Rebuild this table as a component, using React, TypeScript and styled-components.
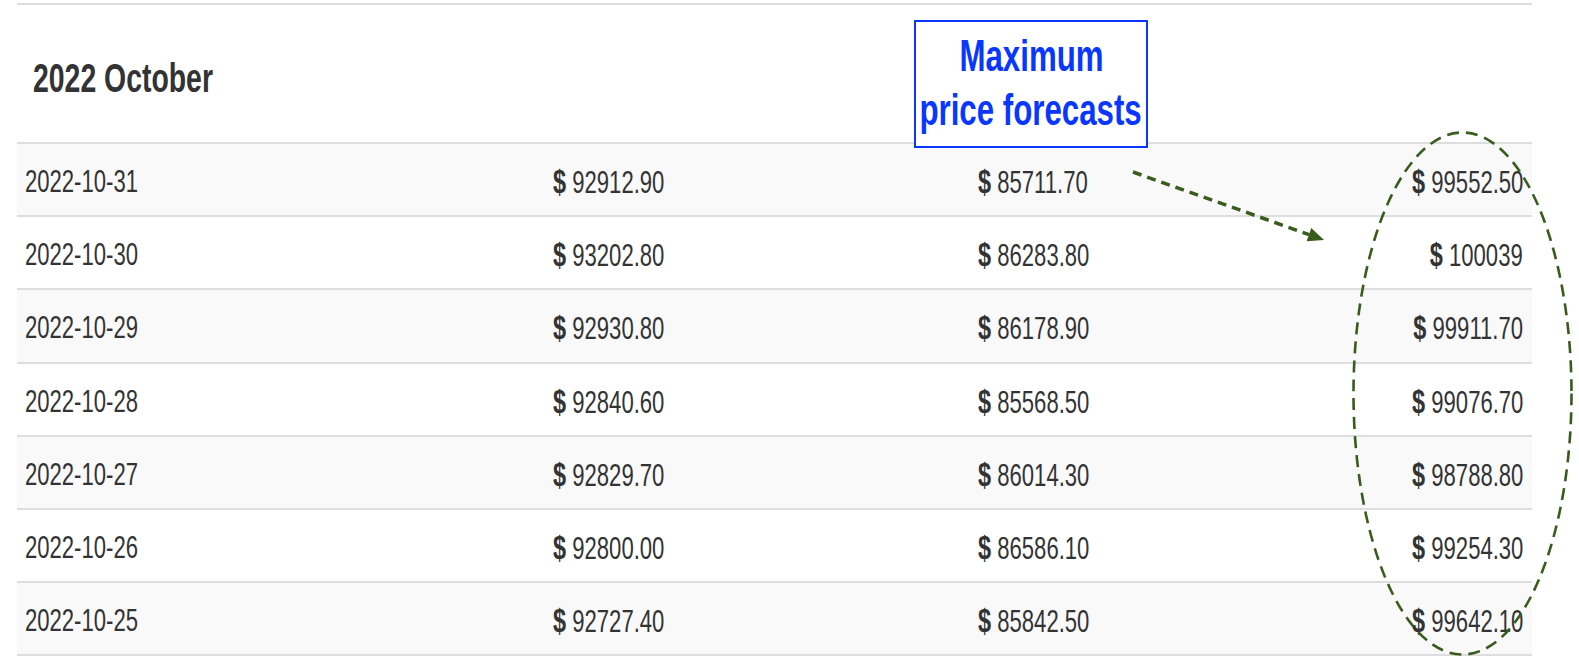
import React from "react";
import styled, { createGlobalStyle } from "styled-components";

const GlobalStyle = createGlobalStyle`
  html, body {
    margin: 0;
    padding: 0;
    background: #ffffff;
  }
  body {
    font-family: "Liberation Sans", Arial, sans-serif;
    color: #333333;
  }
`;

const Page = styled.div`
  position: relative;
  width: 1579px;
  height: 661px;
  overflow: hidden;
  padding: 3px 0 0 17px;
  box-sizing: border-box;
`;

const Table = styled.div`
  width: 1515px;
  border-top: 2.7px solid #dddddd;
`;

const HeaderRow = styled.div`
  height: 137px;
  display: flex;
  align-items: center;
  padding: 8px 0 0 16px;
  box-sizing: border-box;
`;

const Heading = styled.h2`
  margin: 0;
  font-family: "Liberation Sans", Arial, sans-serif;
  font-weight: 700;
  font-size: 40px;
  line-height: 1;
  color: #333333;
  transform: scaleX(0.71);
  transform-origin: left center;
  white-space: nowrap;
`;

const Row = styled.div<{ $striped: boolean }>`
  display: grid;
  grid-template-columns: 528px 425px 425px minmax(0, 1fr);
  height: 73.2px;
  box-sizing: border-box;
  border-top: 2px solid #dedede;
  background: ${(p) => (p.$striped ? "#f9f9f9" : "#ffffff")};
  &:last-child {
    height: 75.2px;
    border-bottom: 2.5px solid #dedede;
  }
`;

const Cell = styled.div<{ $right?: boolean }>`
  display: flex;
  align-items: center;
  justify-content: ${(p) => (p.$right ? "flex-end" : "flex-start")};
  padding: 4px ${(p) => (p.$right ? "9px" : "8px")} 0 8px;
  min-width: 0;
  font-size: 32px;
  color: #333333;
  white-space: nowrap;
`;

const Txt = styled.span<{ $right?: boolean }>`
  display: inline-block;
  flex-shrink: 0;
  transform: scaleX(0.69);
  transform-origin: ${(p) => (p.$right ? "right" : "left")} center;
`;

const Dollar = styled.span`
  font-weight: 700;
  font-size: 34px;
  margin-right: 9px;
`;

const Callout = styled.div`
  position: absolute;
  left: 914px;
  top: 20px;
  width: 234px;
  height: 128px;
  box-sizing: border-box;
  border: 2.5px solid #0a37ff;
  background: #ffffff;
  display: flex;
  flex-direction: column;
  align-items: center;
  padding-top: 7px;
`;

const CalloutLine = styled.div`
  font-family: "Liberation Sans", Arial, sans-serif;
  font-weight: 700;
  font-size: 44px;
  line-height: 54px;
  color: #0a37ff;
  white-space: nowrap;
  transform: scaleX(0.71);
  transform-origin: center center;
`;

const Overlay = styled.svg`
  position: absolute;
  left: 0;
  top: 0;
  pointer-events: none;
`;

const rows: [string, string, string, string][] = [
  ["2022-10-31", "92912.90", "85711.70", "99552.50"],
  ["2022-10-30", "93202.80", "86283.80", "100039"],
  ["2022-10-29", "92930.80", "86178.90", "99911.70"],
  ["2022-10-28", "92840.60", "85568.50", "99076.70"],
  ["2022-10-27", "92829.70", "86014.30", "98788.80"],
  ["2022-10-26", "92800.00", "86586.10", "99254.30"],
  ["2022-10-25", "92727.40", "85842.50", "99642.10"],
];

const Price: React.FC<{ value: string; right?: boolean }> = ({ value, right }) => (
  <Cell $right={right}>
    <Txt $right={right}>
      <Dollar>$</Dollar>
      {value}
    </Txt>
  </Cell>
);

export default function App() {
  const green = "#385c1c";
  return (
    <>
      <GlobalStyle />
      <Page>
        <Table>
          <HeaderRow>
            <Heading>2022 October</Heading>
          </HeaderRow>
          {rows.map((r, i) => (
            <Row key={r[0]} $striped={i % 2 === 0}>
              <Cell>
                <Txt>{r[0]}</Txt>
              </Cell>
              <Price value={r[1]} />
              <Price value={r[2]} />
              <Price value={r[3]} right />
            </Row>
          ))}
        </Table>
        <Callout>
          <CalloutLine>Maximum</CalloutLine>
          <CalloutLine>price forecasts</CalloutLine>
        </Callout>
        <Overlay width="1579" height="661" viewBox="0 0 1579 661">
          <line
            x1="1133"
            y1="172"
            x2="1309"
            y2="234.6"
            stroke={green}
            strokeWidth="3.5"
            strokeDasharray="9 6"
          />
          <polygon points="1324,240 1306.6,241.2 1311.3,228" fill={green} />
          <ellipse
            cx="1462.5"
            cy="393.5"
            rx="109"
            ry="261"
            fill="none"
            stroke={green}
            strokeWidth="2.6"
            strokeDasharray="12 7"
          />
        </Overlay>
      </Page>
    </>
  );
}
